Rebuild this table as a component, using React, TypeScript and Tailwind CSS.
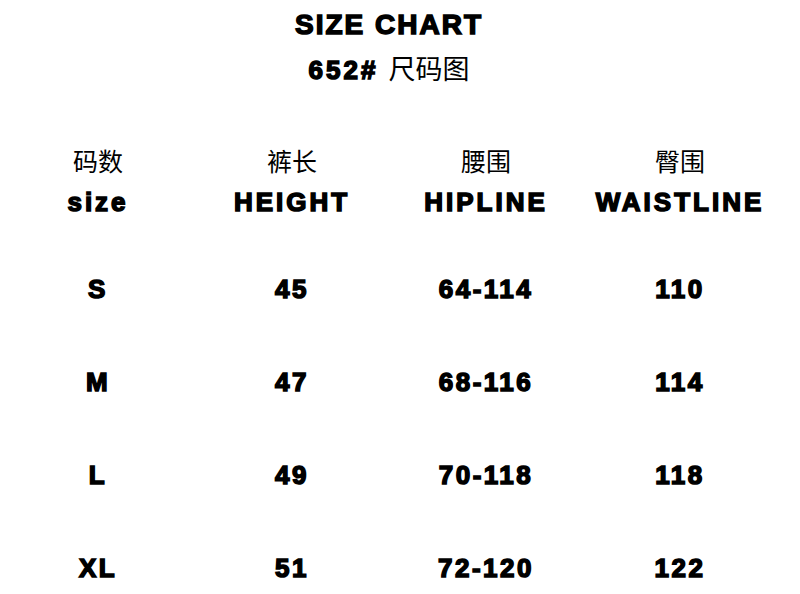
import React from "react";

const rows = [
  ["S", "45", "64-114", "110"],
  ["M", "47", "68-116", "114"],
  ["L", "49", "70-118", "118"],
  ["XL", "51", "72-120", "122"],
];

const zh = ["码数", "裤长", "腰围", "臀围"];
const en = ["size", "HEIGHT", "HIPLINE", "WAISTLINE"];

const bold =
  "font-['Liberation_Sans',Arial,sans-serif] font-bold [-webkit-text-stroke:1.5px_black]";
const cjk = "font-['Noto_Sans_CJK_SC',sans-serif] font-normal";

const App: React.FC = () => {
  return (
    <div className="w-[800px] h-[594px] overflow-hidden bg-white text-black">
      <div className="pr-[22px]">
        <div className={`h-[50px] leading-[50px] text-center text-[28px] tracking-[2px] ${bold}`}>
          SIZE CHART
        </div>
        <div className="h-[36px] leading-[36px] text-center">
          <span className={`text-[26px] tracking-[3px] ${bold}`}>652#</span>
          <span className={`ml-[10px] text-[27px] ${cjk}`}>尺码图</span>
        </div>
      </div>

      <div className="ml-[1px] w-[776px] mt-[54px]">
        <div className="grid grid-cols-4 h-[40px] items-center">
          {zh.map((t) => (
            <div key={t} className={`text-center text-[25px] leading-[40px] ${cjk}`}>
              {t}
            </div>
          ))}
        </div>
        <div className="grid grid-cols-4 h-[45px] items-center">
          {en.map((t) => (
            <div
              key={t}
              className={`text-center text-[26px] leading-[45px] tracking-[3px] ${bold}`}
            >
              {t}
            </div>
          ))}
        </div>

        <div className="mt-[18px]">
          {rows.map((r) => (
            <div key={r[0]} className="grid grid-cols-4 h-[93px] items-center">
              {r.map((c, i) => (
                <div
                  key={i}
                  className={`text-center text-[26px] leading-[93px] tracking-[2.5px] ${bold}`}
                >
                  {c}
                </div>
              ))}
            </div>
          ))}
        </div>
      </div>
    </div>
  );
};

export default App;
